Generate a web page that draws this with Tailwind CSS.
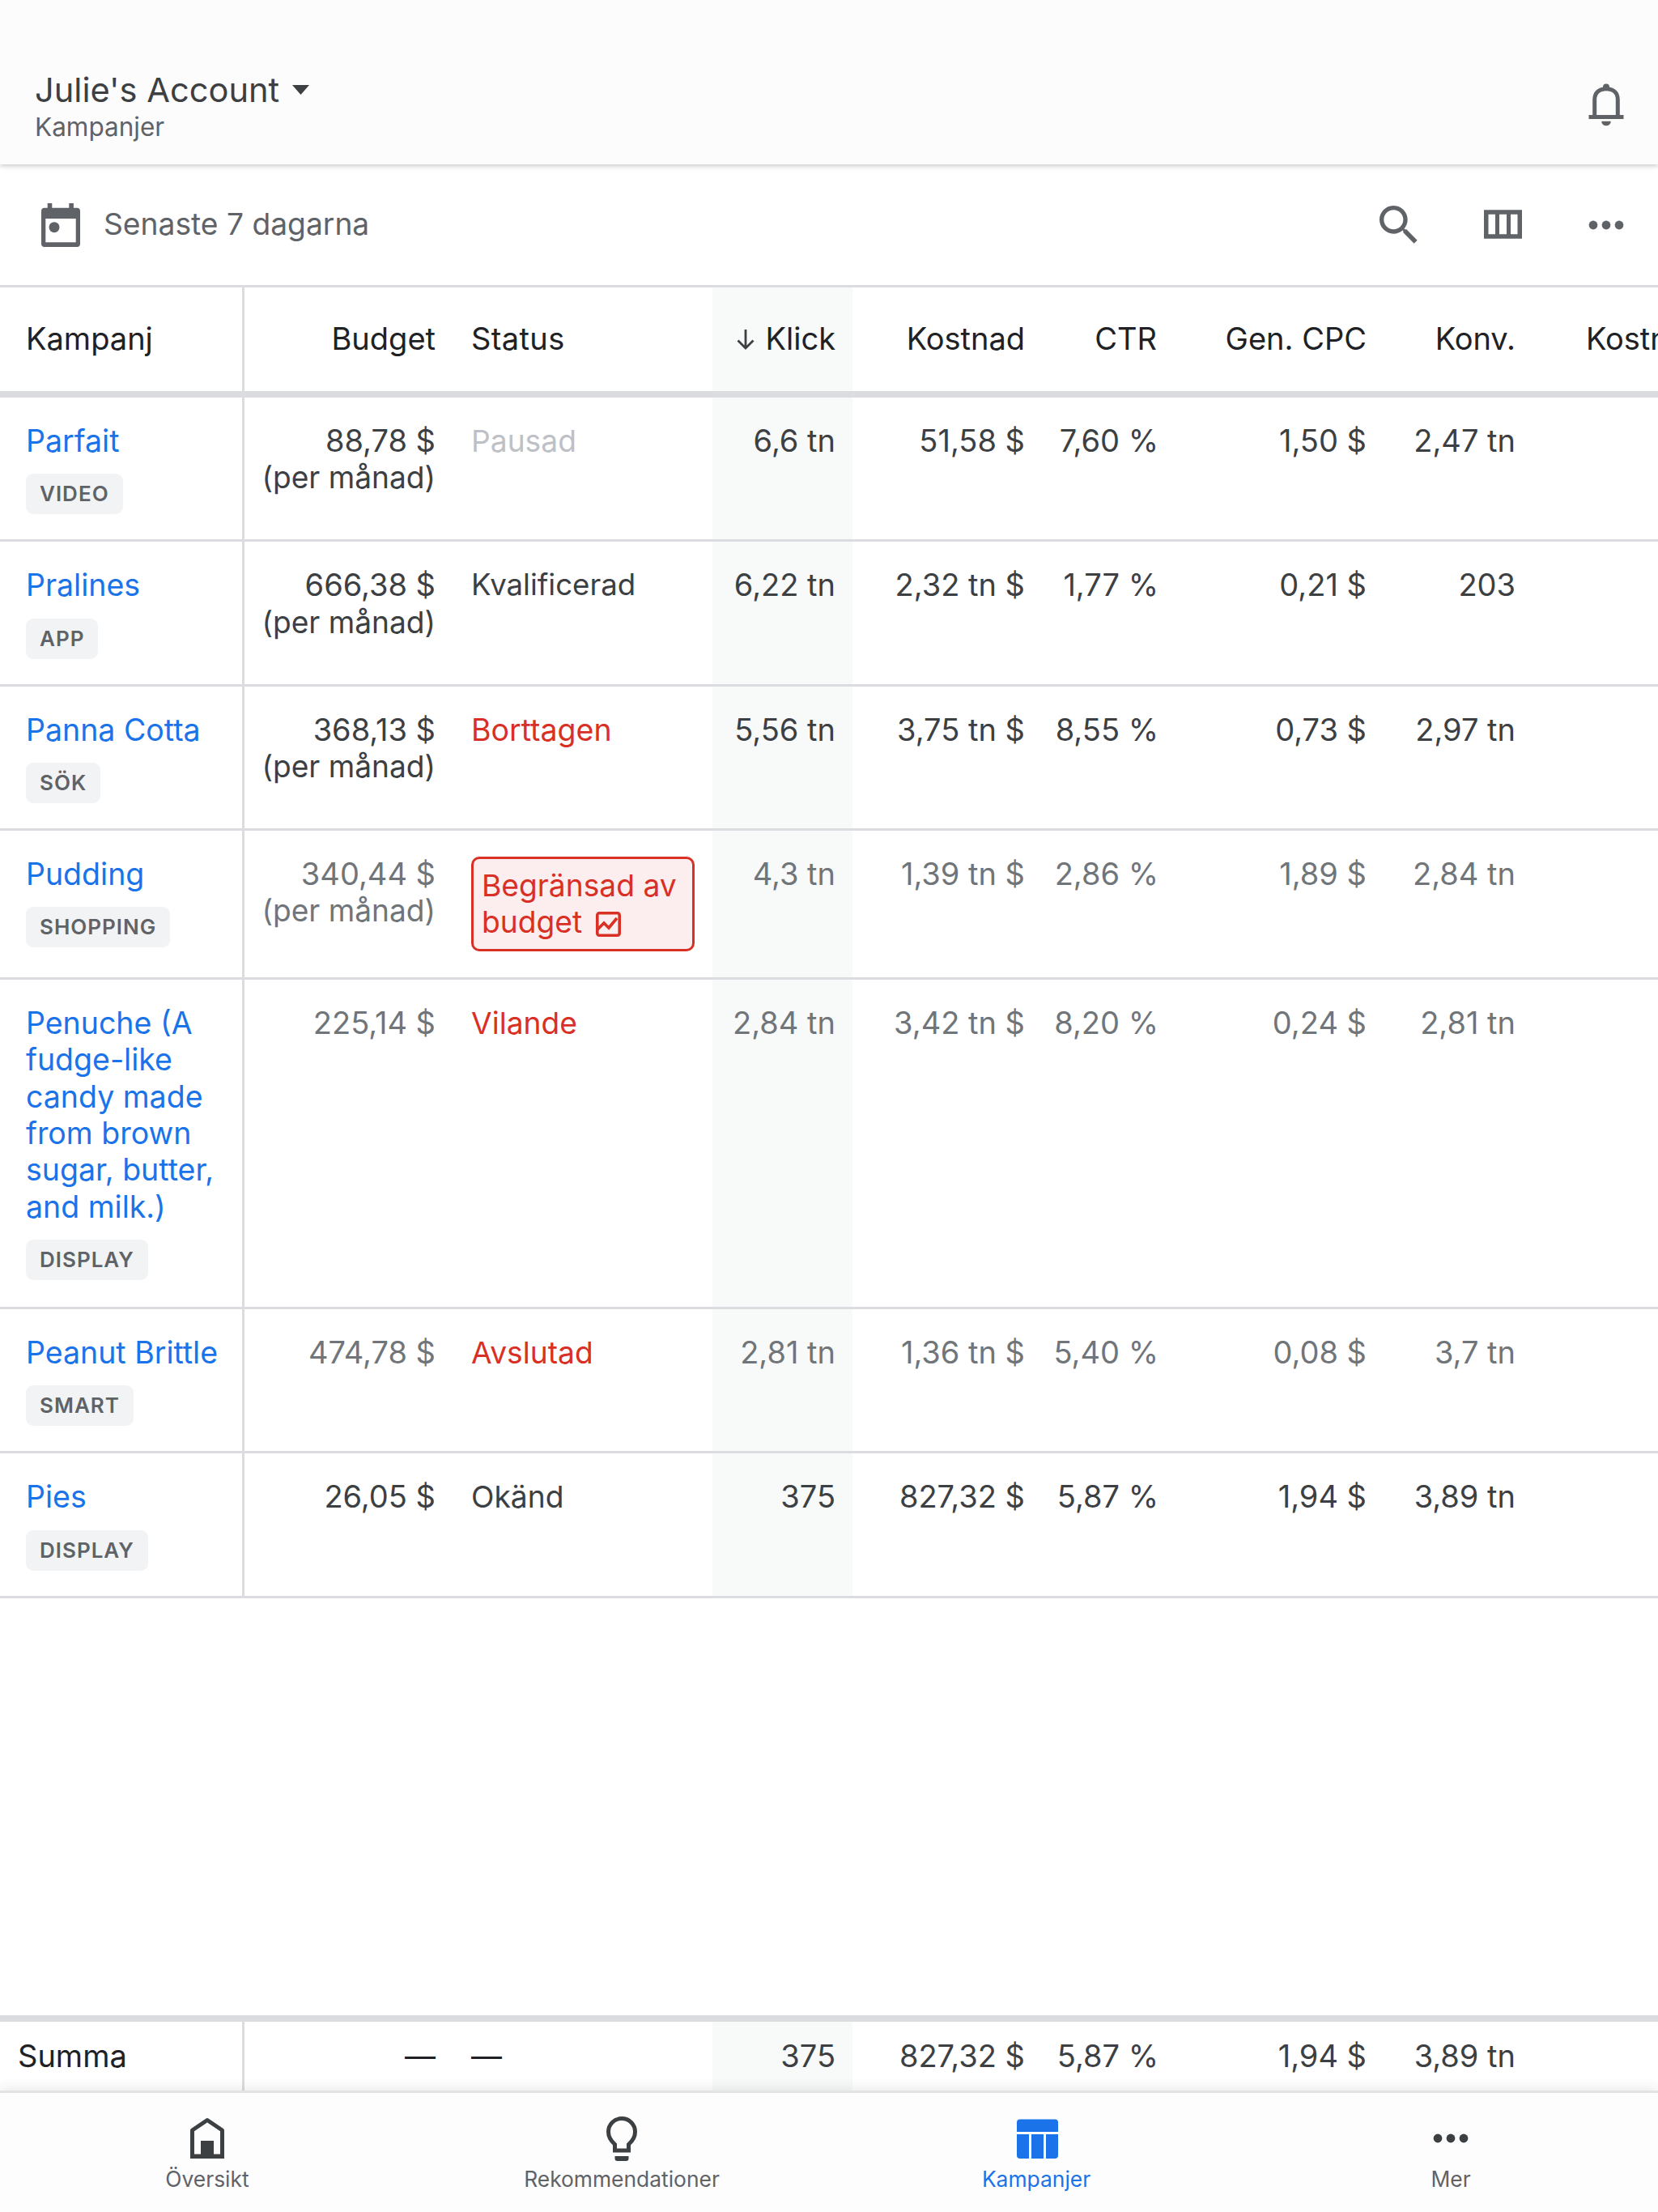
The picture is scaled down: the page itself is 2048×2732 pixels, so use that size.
<!doctype html>
<html lang="sv">
<head>
<meta charset="utf-8">
<title>Kampanjer</title>
<script src="https://cdn.jsdelivr.net/npm/@tailwindcss/browser@4"></script>
</head>
<body class="bg-white font-['Inter','Liberation_Sans',sans-serif] text-[#3c4043]">
<div class="flex h-[2732px] w-[2048px] flex-col overflow-hidden">

  <header class="relative z-10 flex h-[203px] shrink-0 items-end justify-between bg-[#fcfcfc] pb-[26px] pl-[43px] pr-[32px] shadow-[0_2px_6px_rgba(0,0,0,0.22)]">
    <div>
      <div class="flex items-center gap-[16px] text-[41.6px] leading-[52px] text-[#3c4043]">
        <span>Julie's Account</span>
        <svg class="h-[12px] w-[21px]" viewBox="0 0 21 12"><path d="M0 0h21L10.5 12z" fill="#3c4043"/></svg>
      </div>
      <div class="text-[31.5px] leading-[40px] text-[#5f6368]">Kampanjer</div>
    </div>
    <svg class="mb-[16px] h-[64px] w-[64px]" viewBox="0 0 64 64" fill="#5f6368">
      <g transform="translate(10.5 6)">
        <circle cx="21.5" cy="4.5" r="4"/>
        <path d="M7.2 40V20C7.2 11.5 13 6.7 21.5 6.7S35.8 11.5 35.8 20V40" fill="none" stroke="#5f6368" stroke-width="5"/>
        <rect x="0" y="39" width="43" height="5"/>
        <path d="M15.7 46.7h11.6a5.8 5.6 0 0 1-11.6 0z"/>
      </g>
    </svg>
  </header>

  <div class="flex h-[149px] shrink-0 items-center justify-between pl-[51px] pr-[32px]">
    <div class="flex items-center gap-[29px]">
      <svg class="h-[54px] w-[48px]" viewBox="0 0 48 54" fill="#5f6368">
        <rect x="7.7" y="0" width="5.6" height="8"/>
        <rect x="34.3" y="0" width="5.6" height="8"/>
        <path fill-rule="evenodd" d="M4 5.7h40a4 4 0 0 1 4 4V50a4 4 0 0 1-4 4H4a4 4 0 0 1-4-4V9.7a4 4 0 0 1 4-4zM5.3 19v29.300h37.400V19z"/>
        <circle cx="16" cy="29.7" r="6.5"/>
      </svg>
      <span class="pb-[2px] text-[37.2px] leading-[46px] text-[#5f6368]">Senaste 7 dagarna</span>
    </div>
    <div class="flex items-center gap-[64px]">
      <svg class="h-[64px] w-[64px]" viewBox="0 0 24 24" fill="#5f6368"><path d="M15.5 14h-.79l-.28-.27C15.41 12.59 16 11.11 16 9.5 16 5.91 13.09 3 9.5 3S3 5.91 3 9.5 5.91 16 9.5 16c1.61 0 3.09-.59 4.23-1.57l.27.28v.79l5 4.99L20.49 19l-4.99-5zm-6 0C7.01 14 5 11.99 5 9.5S7.01 5 9.5 5 14 7.01 14 9.5 11.99 14 9.5 14z"/></svg>
      <svg class="h-[64px] w-[64px]" viewBox="0 0 64 64" fill="none" stroke="#5f6368" stroke-width="5.5"><rect x="11.750" y="16" width="41.500" height="30"/><path d="M25.500 16v30M39.500 16v30" stroke-width="5"/></svg>
      <svg class="h-[64px] w-[64px]" viewBox="0 0 64 64" fill="#5f6368"><circle cx="16" cy="32" r="5.4"/><circle cx="32" cy="32" r="5.4"/><circle cx="48" cy="32" r="5.4"/></svg>
    </div>
  </div>

  <div class="min-h-0 flex-1 overflow-hidden">
    <table class="w-[2048px] table-fixed border-separate border-spacing-0 text-[38px] leading-[45.36px]">
      <colgroup>
        <col class="w-[302px]"><col class="w-[258px]"><col class="w-[320px]"><col class="w-[173px]"><col class="w-[233px]"><col class="w-[165px]"><col class="w-[257px]"><col class="w-[184px]"><col class="w-[156px]">
      </colgroup>
      <thead>
        <tr class="h-[139px] text-[#202124]">
          <th class="border-y-[3px] border-r-[3px] border-b-[8px] border-[#dadce0] pl-[32px] text-left font-normal">Kampanj</th>
          <th class="border-t-[3px] border-b-[8px] border-[#dadce0] px-[22px] text-right font-normal">Budget</th>
          <th class="border-t-[3px] border-b-[8px] border-[#dadce0] px-[22px] text-left font-normal tracking-[0.4px]">Status</th>
          <th class="border-t-[3px] border-b-[8px] border-[#dadce0] bg-[#f8f9f9] pr-[21px] text-right font-normal"><span class="inline-flex items-center gap-[10px]"><svg class="h-[28px] w-[28px]" viewBox="0 0 28 28" fill="none" stroke="#3c4043" stroke-width="2.8"><path d="M14 2v23M4.500 15.500 14 25l9.500-9.500"/></svg>Klick</span></th>
          <th class="border-t-[3px] border-b-[8px] border-[#dadce0] pr-[20px] text-right font-normal">Kostnad</th>
          <th class="border-t-[3px] border-b-[8px] border-[#dadce0] pr-[22px] text-right font-normal">CTR</th>
          <th class="border-t-[3px] border-b-[8px] border-[#dadce0] pr-[20px] text-right font-normal">Gen. CPC</th>
          <th class="border-t-[3px] border-b-[8px] border-[#dadce0] pr-[20px] text-right font-normal">Konv.</th>
          <th class="overflow-hidden whitespace-nowrap border-t-[3px] border-b-[8px] border-[#dadce0] pl-[67px] text-left font-normal">Kostnad/konv.</th>
        </tr>
      </thead>
      <tbody class="align-top">
        <tr>
          <td class="border-r-[3px] border-b-[3px] border-[#dadce0] pb-[31px] pl-[32px] pr-[16px] pt-[31px] text-[37.5px]"><a class="text-[#1a73e8]">Parfait</a><div class="mt-[18px] w-fit rounded-[9px] bg-[#f1f3f4] px-[17px] text-[26px] font-semibold uppercase leading-[50px] tracking-[1px] text-[#5f6368]">Video</div></td>
          <td class="whitespace-nowrap border-b-[3px] border-[#dadce0] pr-[22px] pt-[31px] text-right">88,78 $<br><span class="text-[37.1px]">(per månad)</span></td>
          <td class="border-b-[3px] border-[#dadce0] px-[22px] pt-[31px] text-[37.2px] text-[#bdc1c6]">Pausad</td>
          <td class="border-b-[3px] border-[#dadce0] bg-[#f8f9f9] pr-[21px] pt-[31px] text-right">6,6 tn</td>
          <td class="border-b-[3px] border-[#dadce0] pr-[20px] pt-[31px] text-right">51,58 $</td>
          <td class="border-b-[3px] border-[#dadce0] pr-[20px] pt-[31px] text-right">7,60 %</td>
          <td class="border-b-[3px] border-[#dadce0] pr-[20px] pt-[31px] text-right">1,50 $</td>
          <td class="border-b-[3px] border-[#dadce0] pr-[20px] pt-[31px] text-right">2,47 tn</td>
          <td class="border-b-[3px] border-[#dadce0]"></td>
        </tr>
        <tr>
          <td class="border-r-[3px] border-b-[3px] border-[#dadce0] pb-[31px] pl-[32px] pr-[16px] pt-[31px] text-[37.5px]"><a class="text-[#1a73e8]">Pralines</a><div class="mt-[18px] w-fit rounded-[9px] bg-[#f1f3f4] px-[17px] text-[26px] font-semibold uppercase leading-[50px] tracking-[1px] text-[#5f6368]">App</div></td>
          <td class="whitespace-nowrap border-b-[3px] border-[#dadce0] pr-[22px] pt-[31px] text-right">666,38 $<br><span class="text-[37.1px]">(per månad)</span></td>
          <td class="border-b-[3px] border-[#dadce0] px-[22px] pt-[31px] text-[36.6px]">Kvalificerad</td>
          <td class="border-b-[3px] border-[#dadce0] bg-[#f8f9f9] pr-[21px] pt-[31px] text-right">6,22 tn</td>
          <td class="border-b-[3px] border-[#dadce0] pr-[20px] pt-[31px] text-right">2,32 tn $</td>
          <td class="border-b-[3px] border-[#dadce0] pr-[20px] pt-[31px] text-right">1,77 %</td>
          <td class="border-b-[3px] border-[#dadce0] pr-[20px] pt-[31px] text-right">0,21 $</td>
          <td class="border-b-[3px] border-[#dadce0] pr-[20px] pt-[31px] text-right">203</td>
          <td class="border-b-[3px] border-[#dadce0]"></td>
        </tr>
        <tr>
          <td class="border-r-[3px] border-b-[3px] border-[#dadce0] pb-[31px] pl-[32px] pr-[16px] pt-[31px] text-[37.5px]"><a class="text-[#1a73e8]">Panna Cotta</a><div class="mt-[18px] w-fit rounded-[9px] bg-[#f1f3f4] px-[17px] text-[26px] font-semibold uppercase leading-[50px] tracking-[1px] text-[#5f6368]">Sök</div></td>
          <td class="whitespace-nowrap border-b-[3px] border-[#dadce0] pr-[22px] pt-[31px] text-right">368,13 $<br><span class="text-[37.1px]">(per månad)</span></td>
          <td class="border-b-[3px] border-[#dadce0] px-[22px] pt-[31px] text-[37.5px] text-[#d93025]">Borttagen</td>
          <td class="border-b-[3px] border-[#dadce0] bg-[#f8f9f9] pr-[21px] pt-[31px] text-right">5,56 tn</td>
          <td class="border-b-[3px] border-[#dadce0] pr-[20px] pt-[31px] text-right">3,75 tn $</td>
          <td class="border-b-[3px] border-[#dadce0] pr-[20px] pt-[31px] text-right">8,55 %</td>
          <td class="border-b-[3px] border-[#dadce0] pr-[20px] pt-[31px] text-right">0,73 $</td>
          <td class="border-b-[3px] border-[#dadce0] pr-[20px] pt-[31px] text-right">2,97 tn</td>
          <td class="border-b-[3px] border-[#dadce0]"></td>
        </tr>
        <tr class="text-[#70757a]">
          <td class="border-r-[3px] border-b-[3px] border-[#dadce0] pb-[32px] pl-[32px] pr-[16px] pt-[31px] text-[37.5px]"><a class="text-[#1a73e8]">Pudding</a><div class="mt-[18px] w-fit rounded-[9px] bg-[#f1f3f4] px-[17px] text-[26px] font-semibold uppercase leading-[50px] tracking-[1px] text-[#5f6368]">Shopping</div></td>
          <td class="whitespace-nowrap border-b-[3px] border-[#dadce0] pr-[22px] pt-[31px] text-right">340,44 $<br><span class="text-[37.1px]">(per månad)</span></td>
          <td class="border-b-[3px] border-[#dadce0] px-[22px] pb-[32px] pt-[32px] text-[37.2px]">
            <div class="rounded-[10px] border-[3px] border-[#d93025] bg-[#fceeee] py-[10px] pl-[10px] pr-[8px] text-[#d93025]">Begränsad av budget <svg class="ml-[6px] inline-block h-[31px] w-[31px] align-[-5px]" viewBox="0 0 31 31" fill="none" stroke="#d93025" stroke-width="3.6"><rect x="1.800" y="1.800" width="27.400" height="27.400" rx="2.500"/><path d="M2 22l8-8 6 6 10-12"/></svg></div>
          </td>
          <td class="border-b-[3px] border-[#dadce0] bg-[#f8f9f9] pr-[21px] pt-[31px] text-right">4,3 tn</td>
          <td class="border-b-[3px] border-[#dadce0] pr-[20px] pt-[31px] text-right">1,39 tn $</td>
          <td class="border-b-[3px] border-[#dadce0] pr-[20px] pt-[31px] text-right">2,86 %</td>
          <td class="border-b-[3px] border-[#dadce0] pr-[20px] pt-[31px] text-right">1,89 $</td>
          <td class="border-b-[3px] border-[#dadce0] pr-[20px] pt-[31px] text-right">2,84 tn</td>
          <td class="border-b-[3px] border-[#dadce0]"></td>
        </tr>
        <tr class="text-[#70757a]">
          <td class="border-r-[3px] border-b-[3px] border-[#dadce0] pb-[33px] pl-[32px] pr-[16px] pt-[31px] text-[37.5px]"><a class="text-[#1a73e8]">Penuche (A fudge-like candy made from brown sugar, butter, and milk.)</a><div class="mt-[18px] w-fit rounded-[9px] bg-[#f1f3f4] px-[17px] text-[26px] font-semibold uppercase leading-[50px] tracking-[1px] text-[#5f6368]">Display</div></td>
          <td class="border-b-[3px] border-[#dadce0] pr-[22px] pt-[31px] text-right">225,14 $</td>
          <td class="border-b-[3px] border-[#dadce0] px-[22px] pt-[31px] text-[37.2px] text-[#d93025]">Vilande</td>
          <td class="border-b-[3px] border-[#dadce0] bg-[#f8f9f9] pr-[21px] pt-[31px] text-right">2,84 tn</td>
          <td class="border-b-[3px] border-[#dadce0] pr-[20px] pt-[31px] text-right">3,42 tn $</td>
          <td class="border-b-[3px] border-[#dadce0] pr-[20px] pt-[31px] text-right">8,20 %</td>
          <td class="border-b-[3px] border-[#dadce0] pr-[20px] pt-[31px] text-right">0,24 $</td>
          <td class="border-b-[3px] border-[#dadce0] pr-[20px] pt-[31px] text-right">2,81 tn</td>
          <td class="border-b-[3px] border-[#dadce0]"></td>
        </tr>
        <tr class="text-[#70757a]">
          <td class="border-r-[3px] border-b-[3px] border-[#dadce0] pb-[31px] pl-[32px] pr-[16px] pt-[31px] text-[37.5px]"><a class="text-[#1a73e8]">Peanut Brittle</a><div class="mt-[18px] w-fit rounded-[9px] bg-[#f1f3f4] px-[17px] text-[26px] font-semibold uppercase leading-[50px] tracking-[1px] text-[#5f6368]">Smart</div></td>
          <td class="border-b-[3px] border-[#dadce0] pr-[22px] pt-[31px] text-right">474,78 $</td>
          <td class="border-b-[3px] border-[#dadce0] px-[22px] pt-[31px] text-[37.2px] text-[#d93025]">Avslutad</td>
          <td class="border-b-[3px] border-[#dadce0] bg-[#f8f9f9] pr-[21px] pt-[31px] text-right">2,81 tn</td>
          <td class="border-b-[3px] border-[#dadce0] pr-[20px] pt-[31px] text-right">1,36 tn $</td>
          <td class="border-b-[3px] border-[#dadce0] pr-[20px] pt-[31px] text-right">5,40 %</td>
          <td class="border-b-[3px] border-[#dadce0] pr-[20px] pt-[31px] text-right">0,08 $</td>
          <td class="border-b-[3px] border-[#dadce0] pr-[20px] pt-[31px] text-right">3,7 tn</td>
          <td class="border-b-[3px] border-[#dadce0]"></td>
        </tr>
        <tr>
          <td class="border-r-[3px] border-b-[3px] border-[#dadce0] pb-[31px] pl-[32px] pr-[16px] pt-[31px] text-[37.5px]"><a class="text-[#1a73e8]">Pies</a><div class="mt-[18px] w-fit rounded-[9px] bg-[#f1f3f4] px-[17px] text-[26px] font-semibold uppercase leading-[50px] tracking-[1px] text-[#5f6368]">Display</div></td>
          <td class="border-b-[3px] border-[#dadce0] pr-[22px] pt-[31px] text-right">26,05 $</td>
          <td class="border-b-[3px] border-[#dadce0] px-[22px] pt-[31px] text-[37.2px]">Okänd</td>
          <td class="border-b-[3px] border-[#dadce0] bg-[#f8f9f9] pr-[21px] pt-[31px] text-right">375</td>
          <td class="border-b-[3px] border-[#dadce0] pr-[20px] pt-[31px] text-right">827,32 $</td>
          <td class="border-b-[3px] border-[#dadce0] pr-[20px] pt-[31px] text-right">5,87 %</td>
          <td class="border-b-[3px] border-[#dadce0] pr-[20px] pt-[31px] text-right">1,94 $</td>
          <td class="border-b-[3px] border-[#dadce0] pr-[20px] pt-[31px] text-right">3,89 tn</td>
          <td class="border-b-[3px] border-[#dadce0]"></td>
        </tr>
      </tbody>
    </table>
  </div>

  <table class="w-[2048px] shrink-0 table-fixed border-separate border-spacing-0 border-t-[8px] border-[#dadce0] text-[38px] leading-[45.36px]">
    <colgroup>
      <col class="w-[302px]"><col class="w-[258px]"><col class="w-[320px]"><col class="w-[173px]"><col class="w-[233px]"><col class="w-[165px]"><col class="w-[257px]"><col class="w-[184px]"><col class="w-[156px]">
    </colgroup>
    <tr class="h-[85px]">
      <td class="border-r-[3px] border-[#dadce0] pl-[22px] text-[#202124]">Summa</td>
      <td class="pr-[22px] text-right text-[#202124]">—</td>
      <td class="px-[22px] text-[#202124]">—</td>
      <td class="bg-[#f8f9f9] pr-[21px] text-right">375</td>
      <td class="pr-[20px] text-right">827,32 $</td>
      <td class="pr-[20px] text-right">5,87 %</td>
      <td class="pr-[20px] text-right">1,94 $</td>
      <td class="pr-[20px] text-right">3,89 tn</td>
      <td></td>
    </tr>
  </table>

  <nav class="relative grid h-[150px] shrink-0 grid-cols-4 border-t-[3px] border-[#e2e3e5] bg-[#fdfdfd] pt-[24px] text-[26.4px] leading-[32px] shadow-[0_-4px_14px_rgba(0,0,0,0.08)]">
    <div class="flex flex-col items-center gap-[2px] text-[#5f6368]">
      <svg class="h-[64px] w-[64px]" viewBox="0 0 64 64" fill="#3c4043"><path d="M13.500 55V22.500L32 10l18.500 12.500V55z" fill="none" stroke="#3c4043" stroke-width="5" stroke-linejoin="round" transform="translate(0 -.5)"/><rect x="24" y="35" width="16" height="20"/><rect x="11" y="51.500" width="42" height="5.500"/></svg>
      <span>Översikt</span>
    </div>
    <div class="flex flex-col items-center gap-[2px] text-[#5f6368]">
      <svg class="h-[64px] w-[64px]" viewBox="0 0 64 64" fill="#3c4043"><path d="M32 7.500c-9 0-16.500 7-16.500 16.500 0 7 3.500 11.500 8 15.500V47h17v-7.500c4.500-4 8-8.500 8-15.500C48.500 14.500 41 7.500 32 7.500z" fill="none" stroke="#3c4043" stroke-width="5"/><path d="M23.500 54h17v3a3 3 0 0 1-3 3h-11a3 3 0 0 1-3-3z"/></svg>
      <span>Rekommendationer</span>
    </div>
    <div class="flex flex-col items-center gap-[2px] text-[#1a73e8]">
      <svg class="h-[64px] w-[64px]" viewBox="0 0 64 64" fill="#1a73e8"><g transform="translate(1.5 0)"><path d="M6.500 12.500a4 4 0 0 1 4-4h43a4 4 0 0 1 4 4V24h-51z"/><path d="M6.500 27h15v30h-11a4 4 0 0 1-4-4z"/><rect x="24.500" y="27" width="15" height="30"/><path d="M42.500 27h15v26a4 4 0 0 1-4 4h-11z"/></g></svg>
      <span>Kampanjer</span>
    </div>
    <div class="flex flex-col items-center gap-[2px] text-[#5f6368]">
      <svg class="h-[64px] w-[64px]" viewBox="0 0 64 64" fill="#3c4043"><circle cx="16" cy="32" r="5.400"/><circle cx="32" cy="32" r="5.400"/><circle cx="48" cy="32" r="5.400"/></svg>
      <span>Mer</span>
    </div>
  </nav>
</div>
</body>
</html>
